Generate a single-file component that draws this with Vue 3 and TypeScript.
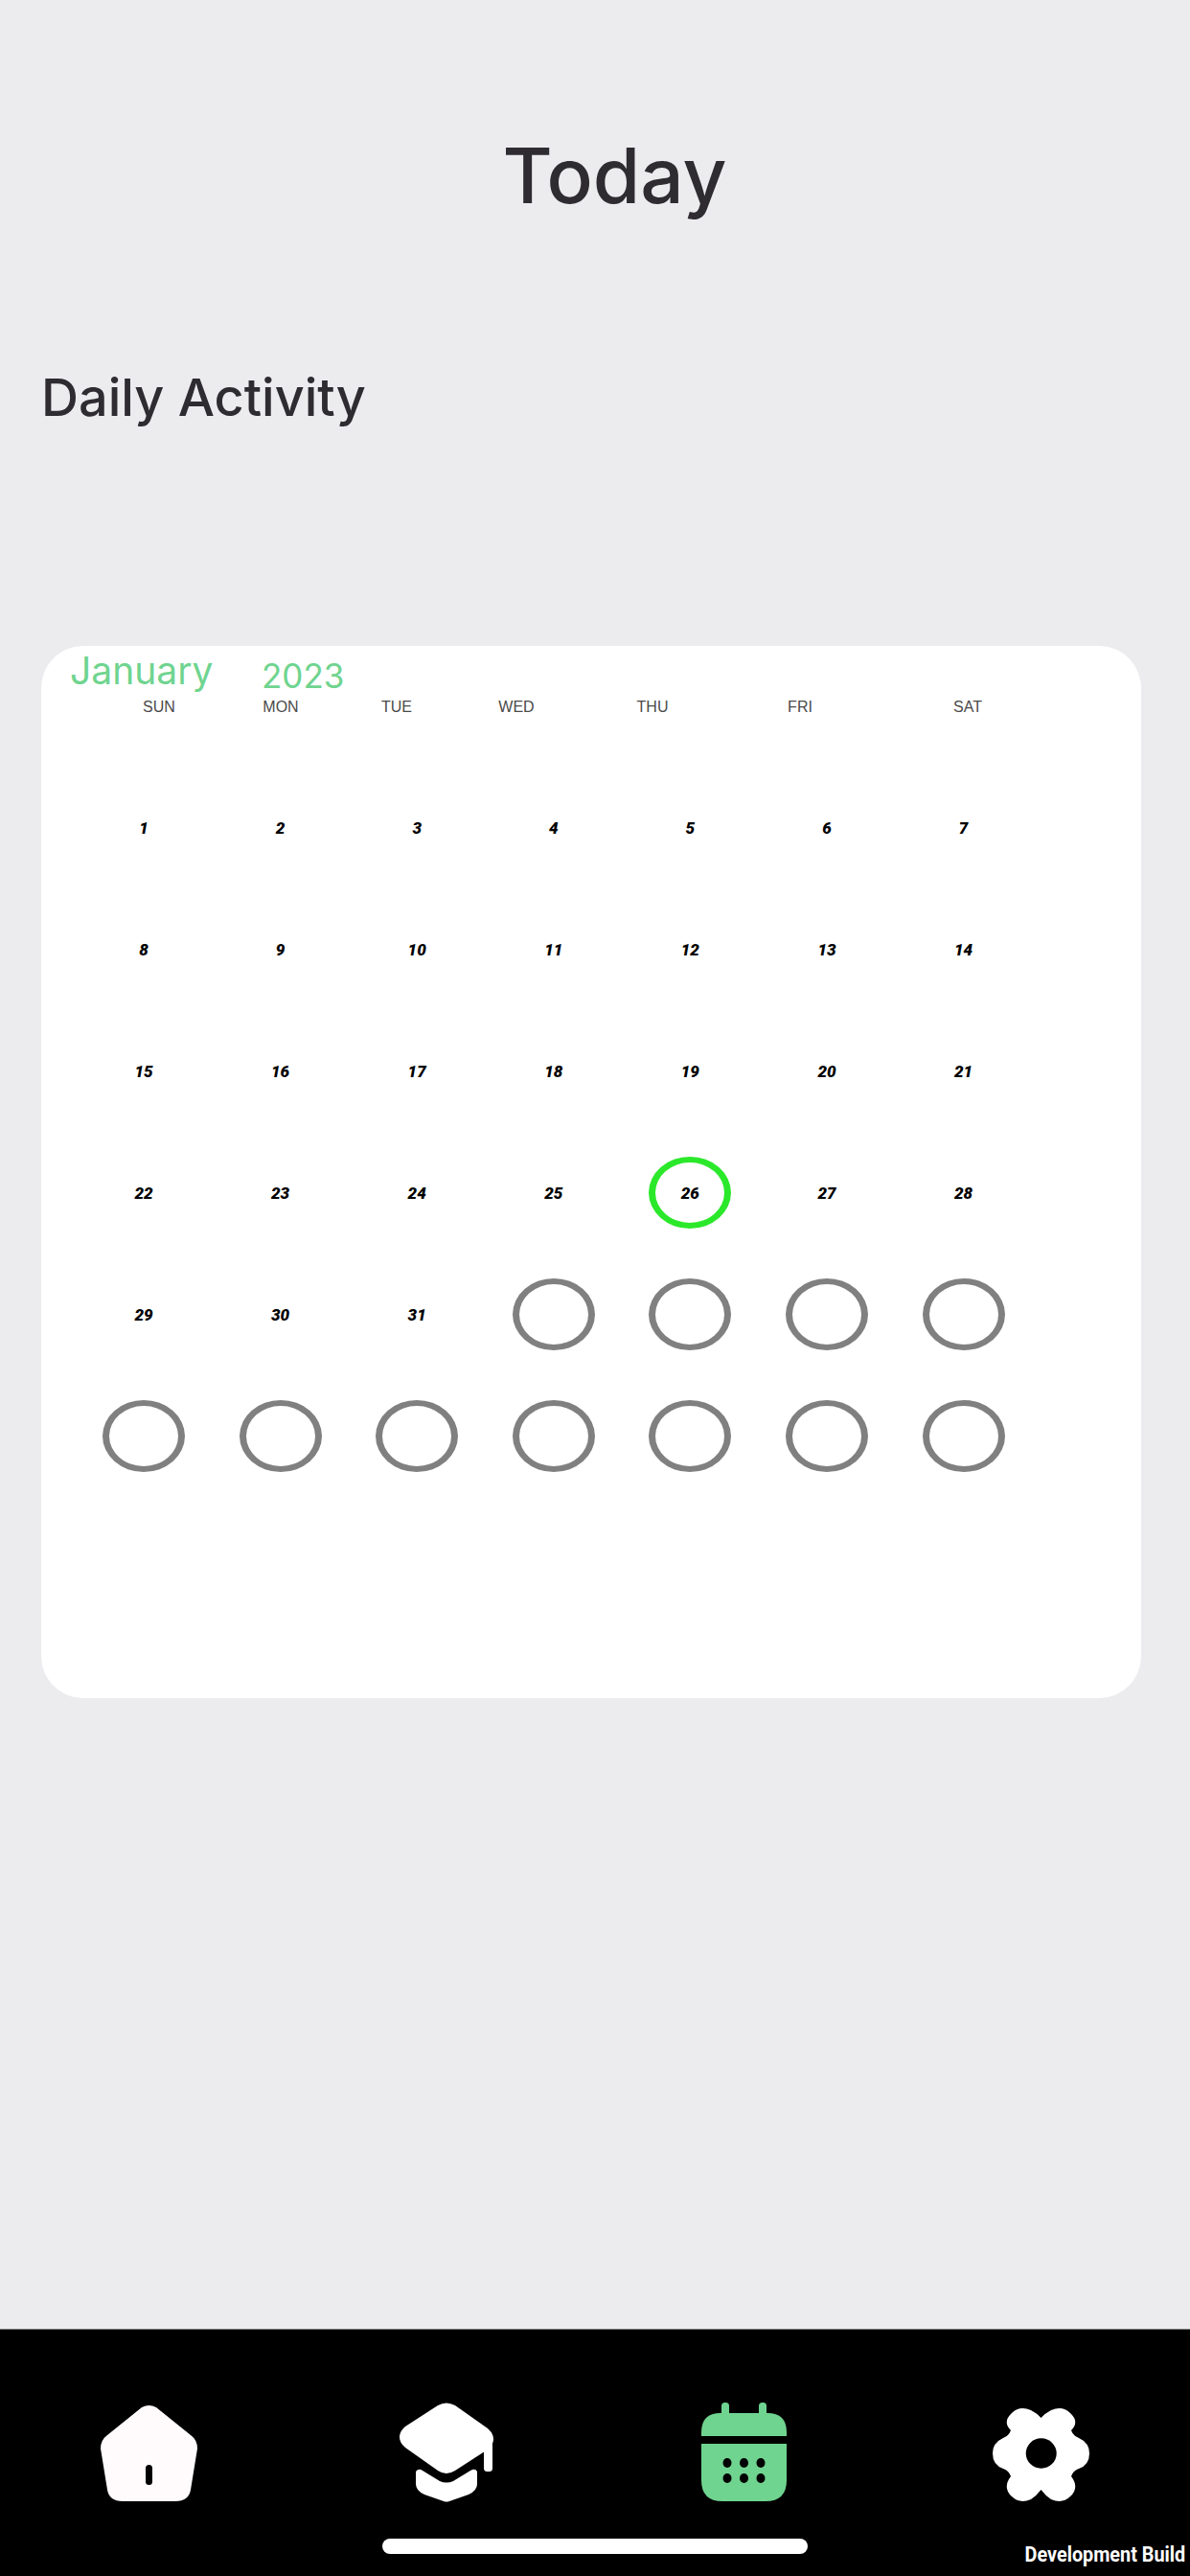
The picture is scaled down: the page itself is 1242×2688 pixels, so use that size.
<script setup lang="ts">
import { computed } from 'vue'

const weekdays = ['SUN', 'MON', 'TUE', 'WED', 'THU', 'FRI', 'SAT']
const today = 26
const daysInMonth = 31
const totalCells = 42

// 月内日期显示数字，其余格子只画空圈
const cells = computed(() =>
  Array.from({ length: totalCells }, (_, i) => ({
    day: i < daysInMonth ? i + 1 : null,
    isToday: i + 1 === today,
  })),
)

const calendarDots = [27, 44.5, 62].flatMap((cx) => [63, 79].map((cy) => ({ cx, cy })))
</script>

<template>
  <div class="screen">
    <main class="content">
      <h1 class="title">Today</h1>
      <h2 class="subtitle">Daily Activity</h2>

      <section class="card">
        <div class="month-row">
          <span class="month">January</span>
          <span class="year">2023</span>
        </div>
        <div class="weekdays">
          <span v-for="name in weekdays" :key="name">{{ name }}</span>
        </div>
        <div class="days">
          <div v-for="(cell, idx) in cells" :key="idx" class="day">
            <span v-if="cell.day" class="day-mark" :class="{ 'is-today': cell.isToday }">{{ cell.day }}</span>
            <span v-else class="day-mark is-empty"></span>
          </div>
        </div>
      </section>
    </main>

    <nav class="tabbar">
      <div class="tab">
        <svg width="101" height="100" viewBox="0 0 101 100">
          <path
            fill="#fffbfd"
            d="M43 2 Q50.5 -2 58 2 L94 31 Q101 36 101 45 L94 88 Q92 100 78 100 L23 100 Q9 100 7 88 L0 45 Q0 36 7 31 Z"
          />
          <rect x="47" y="62" width="7" height="21" rx="3.5" fill="#000" />
        </svg>
      </div>
      <div class="tab">
        <svg width="98" height="103" viewBox="0 0 98 103">
          <path
            fill="#fff"
            d="M40 3 Q48.7 -2 58 3 L92 27 Q98 32 98 38 Q98 44 92 49 L58 71 Q48.7 77 40 71 L6 47 Q0 42 0 36 Q0 30 6 25 Z"
          />
          <rect x="88" y="36" width="9" height="36" rx="3.5" fill="#fff" />
          <path
            fill="#fff"
            d="M17 72 Q20 68 24 71 L42 82 Q49 85 56 82 L74 71 Q79 68 81 72 L81 85 Q81 92 72 96 L52 103 Q49 104 46 103 L26 96 Q17 92 17 85 Z"
          />
        </svg>
      </div>
      <div class="tab">
        <svg width="89" height="103" viewBox="0 0 89 103">
          <rect x="21" y="0" width="8" height="16" rx="3.5" fill="#6fd48f" />
          <rect x="60" y="0" width="8" height="16" rx="3.5" fill="#6fd48f" />
          <path fill="#6fd48f" d="M0 35 L0 31 Q0 11 20 11 L69 11 Q89 11 89 31 L89 35 Z" />
          <path fill="#6fd48f" d="M0 43 L89 43 L89 81 Q89 103 67 103 L22 103 Q0 103 0 81 Z" />
          <ellipse v-for="(dot, i) in calendarDots" :key="i" :cx="dot.cx" :cy="dot.cy" rx="4.5" ry="5" fill="#000" />
        </svg>
      </div>
      <div class="tab">
        <svg width="101" height="97" viewBox="0 0 101 97">
          <path
            fill="#fff"
            d="M19 23 Q10 14 20 5 Q28 -3 40 2 Q46 5 50.5 10 Q55 5 61 2 Q73 -3 81 5 Q91 14 82 23 Q84 29 90 31 Q101 36 101 47 Q101 59 90 63 Q84 65 82 71 Q91 83 81 92 Q73 100 61 95 Q55 91 50.5 85 Q46 91 40 95 Q28 100 20 92 Q10 83 19 71 Q17 65 11 63 Q0 59 0 47 Q0 36 11 31 Q17 29 19 23 Z"
          />
          <ellipse cx="50.7" cy="47" rx="16" ry="15.7" fill="#000" />
        </svg>
      </div>
      <div class="home-bar"></div>
      <span class="dev-build">Development Build</span>
    </nav>
  </div>
</template>

<style scoped>
.screen {
  display: flex;
  flex-direction: column;
  width: 1242px;
  height: 2688px;
  background: #ecebee;
  font-family: Inter, 'Liberation Sans', sans-serif;
}

.content {
  flex: 1;
  padding: 133px 51px 0 43px;
}

.title {
  margin: 0;
  padding-left: 49px;
  font-size: 80px;
  font-weight: 500;
  line-height: 100px;
  text-align: center;
  color: #2e2c30;
}

.subtitle {
  margin: 142px 0 0;
  font-size: 54px;
  font-weight: 500;
  line-height: 80px;
  color: #2e2c30;
}

.card {
  height: 1098px;
  margin-top: 219px;
  border-radius: 44px;
  background: #fff;
}

.month-row {
  display: flex;
  align-items: flex-start;
  height: 54px;
  padding-left: 30px;
  color: #6fd48f;
}

.month {
  width: 200px;
  padding-top: 4px;
  font-size: 39px;
  line-height: 44px;
}

.year {
  padding-top: 9px;
  font-size: 35px;
  line-height: 44px;
}

.weekdays {
  display: grid;
  grid-template-columns: 127px 127px 115px 135px 149px 159px 191px;
  margin-left: 59.5px;
  font-family: 'Liberation Sans', Arial, sans-serif;
  font-size: 16px;
  line-height: 20px;
  text-align: center;
  color: #4a4a4a;
}

.days {
  display: grid;
  grid-template-columns: repeat(7, 142.6px);
  grid-auto-rows: 126.8px;
  margin: 53px 0 0 35.7px;
}

.day {
  display: flex;
  align-items: center;
  justify-content: center;
}

.day-mark {
  display: flex;
  align-items: center;
  justify-content: center;
  box-sizing: border-box;
  width: 86px;
  height: 75px;
  border-radius: 50%;
  font-family: Roboto, 'Liberation Sans', sans-serif;
  font-size: 17px;
  font-style: italic;
  font-weight: 900;
  color: #000;
}

.is-today {
  border-style: solid;
  border-width: 6px 7px;
  border-color: #2be82b;
}

.is-empty {
  border-style: solid;
  border-width: 6px 7px;
  border-color: #808080;
}

.tabbar {
  position: relative;
  display: grid;
  grid-template-columns: repeat(4, 1fr);
  align-items: end;
  box-sizing: border-box;
  height: 258px;
  padding-bottom: 78px;
  border-top: 1px solid #777;
  background: #000;
}

.tab {
  display: flex;
  justify-content: center;
}

.tab svg {
  display: block;
  overflow: visible;
}

.home-bar {
  position: absolute;
  left: 399px;
  top: 218px;
  width: 444px;
  height: 16px;
  border-radius: 8px;
  background: #fff;
}

.dev-build {
  position: absolute;
  right: 5px;
  bottom: 10px;
  font-family: Roboto, 'Liberation Sans', sans-serif;
  font-size: 22px;
  font-weight: 700;
  line-height: 24px;
  color: #fff;
  transform: scaleX(0.9);
  transform-origin: right center;
}
</style>

<style>
body {
  background: #ecebee;
}
</style>
